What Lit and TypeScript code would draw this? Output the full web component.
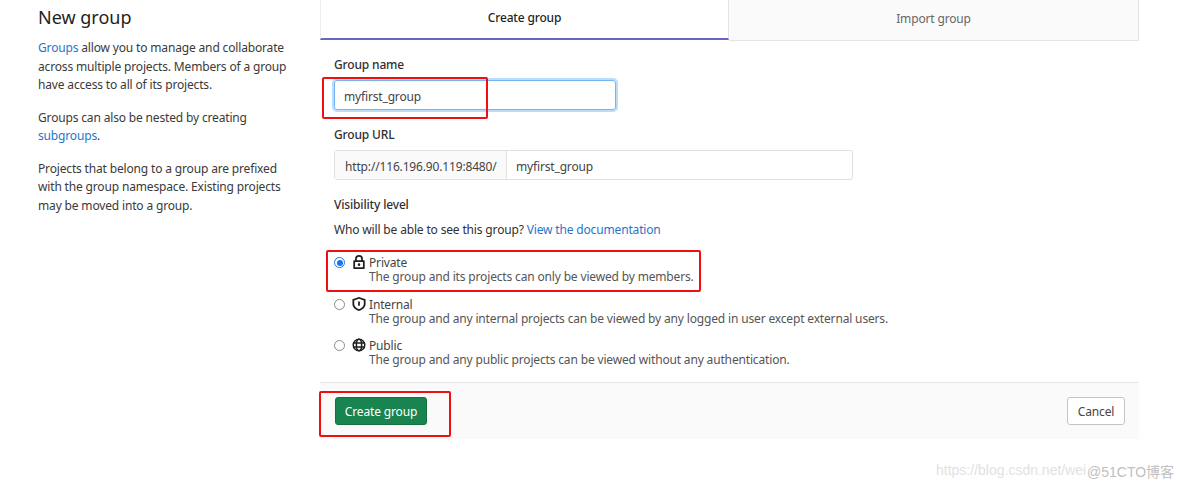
import { LitElement, html, css } from "lit";
import { customElement } from "lit/decorators.js";

@customElement("app-root")
export class AppRoot extends LitElement {
  static styles = css`
    :host { display: block; position: relative; width: 1184px; height: 486px; overflow: hidden; background: #fff;
      font-family: "Noto Sans", "Open Sans", sans-serif; font-size: 12px; letter-spacing: -0.16px; color: #2e2e2e; }
    * { box-sizing: border-box; }
    .page { display: flex; align-items: flex-start; padding-left: 38px; }
    .side { width: 282px; flex: none; padding-top: 4px; }
    h1 { margin: 0 0 9px; font-size: 18px; line-height: 26px; font-weight: 400; letter-spacing: 0; color: #1f1f1f; }
    .side p { margin: 0 0 14px; width: 254px; line-height: 18.5px; color: #3a3a3a; }
    a { color: #1f75cb; text-decoration: none; }
    .main { width: 819px; flex: none; }
    .tabs { display: flex; height: 41px; }
    .tab { flex: 1; display: flex; align-items: center; justify-content: center; padding-bottom: 4px; border-right: 1px solid #e5e5e5; }
    .tab.on { flex: none; width: 409px; height: 40px; font-weight: 500; color: #1f1f1f; border-left: 1px solid #eee; border-bottom: 2px solid #6666c4; }
    .tab.off { background: #fafafa; color: #666; border-bottom: 1px solid #e5e5e5; }
    .form { padding: 16px 14px 0; }
    label.t { display: block; font-weight: 500; line-height: 16px; color: #303030; }
    .name { margin: 7px 0 17px; width: 282px; height: 30px; border: 1px solid #73b5f5; border-radius: 3px; box-shadow: 0 0 0 2px #bcdcfb; padding: 2px 0 0 9px; display: flex; align-items: center; color: #444; }
    .url { display: flex; margin: 7px 0 17px; width: 519px; height: 30px; border: 1px solid #e0e0e0; border-radius: 3px; }
    .url span { display: flex; align-items: center; padding-top: 2px; }
    .pre { width: 172px; padding-left: 10px; background: #fafafa; border-right: 1px solid #e0e0e0; color: #444; }
    .val { padding-left: 9px; color: #444; }
    .who { margin: 8px 0 17px; line-height: 18px; color: #303030; }
    .opt { display: grid; grid-template-columns: 11px 14px 1fr; column-gap: 5px; height: 41.5px; line-height: 14px; color: #555; }
    .opt .r { margin-top: 1px; width: 11px; height: 11px; border: 1px solid #8a8a8a; border-radius: 50%; background: #fff; }
    .opt .r.c { border: 1.5px solid #1a73e8; position: relative; }
    .opt .r.c::after { content: ""; position: absolute; inset: 1.5px; border-radius: 50%; background: #1a73e8; }
    .opt svg { width: 14px; height: 14px; margin-top: -1px; margin-left: 2px; fill: #1f1f1f; }
    .opt svg.line { fill: none; stroke: #1f1f1f; stroke-width: 1.7; }
    .opt .txt b { display: block; font-weight: 400; color: #444; }
    .foot { display: flex; justify-content: space-between; align-items: flex-start; margin-top: 1px; height: 57px; padding: 14px 14px 0 15px; background: #fafafa; border-top: 1px solid #e5e5e5; }
    .btn { height: 28px; display: flex; align-items: center; justify-content: center; border-radius: 3px; padding-top: 1px; }
    .go { width: 92px; background: #1a8451; border: 1px solid #15703f; color: #fff; }
    .no { width: 58px; background: #fff; border: 1px solid #c4c4c4; color: #444; }
    .box { position: absolute; border: 2px solid #f00e0e; border-radius: 2px; }
    .b1 { left: 322px; top: 77px; width: 166px; height: 42px; }
    .b2 { left: 326px; top: 250px; width: 375px; height: 42px; }
    .b3 { left: 319px; top: 391px; width: 132px; height: 46px; }
    .mark { position: absolute; left: 936px; top: 462px; font-family: "Liberation Sans", sans-serif; font-size: 14px; letter-spacing: 0; color: #e2e2e2; white-space: nowrap; }
    .mark b { position: absolute; left: 151px; top: -1px; font-weight: 400; color: #c0c0c0; font-family: "Liberation Sans", "Noto Sans CJK SC", sans-serif; font-size: 14px; }
  `;

  render() {
    return html`
      <div class="page">
        <aside class="side">
          <h1>New group</h1>
          <p><a>Groups</a> allow you to manage and collaborate across multiple projects. Members of a group have access to all of its projects.</p>
          <p>Groups can also be nested by creating <a>subgroups</a>.</p>
          <p>Projects that belong to a group are prefixed with the group namespace. Existing projects may be moved into a group.</p>
        </aside>
        <main class="main">
          <div class="tabs">
            <div class="tab on">Create group</div>
            <div class="tab off">Import group</div>
          </div>
          <div class="form">
            <label class="t">Group name</label>
            <div class="name">myfirst_group</div>
            <label class="t">Group URL</label>
            <div class="url"><span class="pre">http://116.196.90.119:8480/</span><span class="val">myfirst_group</span></div>
            <label class="t">Visibility level</label>
            <div class="who">Who will be able to see this group? <a>View the documentation</a></div>
            <div class="opt">
              <span class="r c"></span>
              <svg viewBox="0 0 16 16"><path fill-rule="evenodd" d="M3.500 6V4.500a4.500 4.500 0 0 1 9 0V6h1a1 1 0 0 1 1 1v8a1 1 0 0 1-1 1h-11a1 1 0 0 1-1-1V7a1 1 0 0 1 1-1h1zm2 0h5V4.500a2.500 2.500 0 0 0-5 0V6zM3.500 8v6h9V8h-9zM8 9.500a1.500 1.500 0 1 1 0 3 1.500 1.500 0 0 1 0-3z"/></svg>
              <div class="txt"><b>Private</b>The group and its projects can only be viewed by members.</div>
            </div>
            <div class="opt">
              <span class="r"></span>
              <svg viewBox="0 0 16 16"><path fill-rule="evenodd" d="M8 0l7.500 2.500V8c0 3.500-3 6.500-7.500 8C3.500 14.500.5 11.500.5 8V2.500L8 0zm0 2.100L2.500 3.900V8c0 2.500 2.200 4.800 5.500 6 3.300-1.200 5.500-3.500 5.500-6V3.900L8 2.100zM7 5h2v5H7V5z"/></svg>
              <div class="txt"><b>Internal</b>The group and any internal projects can be viewed by any logged in user except external users.</div>
            </div>
            <div class="opt">
              <span class="r"></span>
              <svg class="line" viewBox="0 0 16 16"><circle cx="8" cy="8" r="6.600"/><ellipse cx="8" cy="8" rx="3" ry="6.600"/><path d="M1.500 5.800h13M1.500 10.200h13"/></svg>
              <div class="txt"><b>Public</b>The group and any public projects can be viewed without any authentication.</div>
            </div>
          </div>
          <div class="foot">
            <div class="btn go">Create group</div>
            <div class="btn no">Cancel</div>
          </div>
        </main>
      </div>
      <div class="box b1"></div>
      <div class="box b2"></div>
      <div class="box b3"></div>
      <div class="mark">https://blog.csdn.net/wei<b>@51CTO博客</b></div>
    `;
  }
}
